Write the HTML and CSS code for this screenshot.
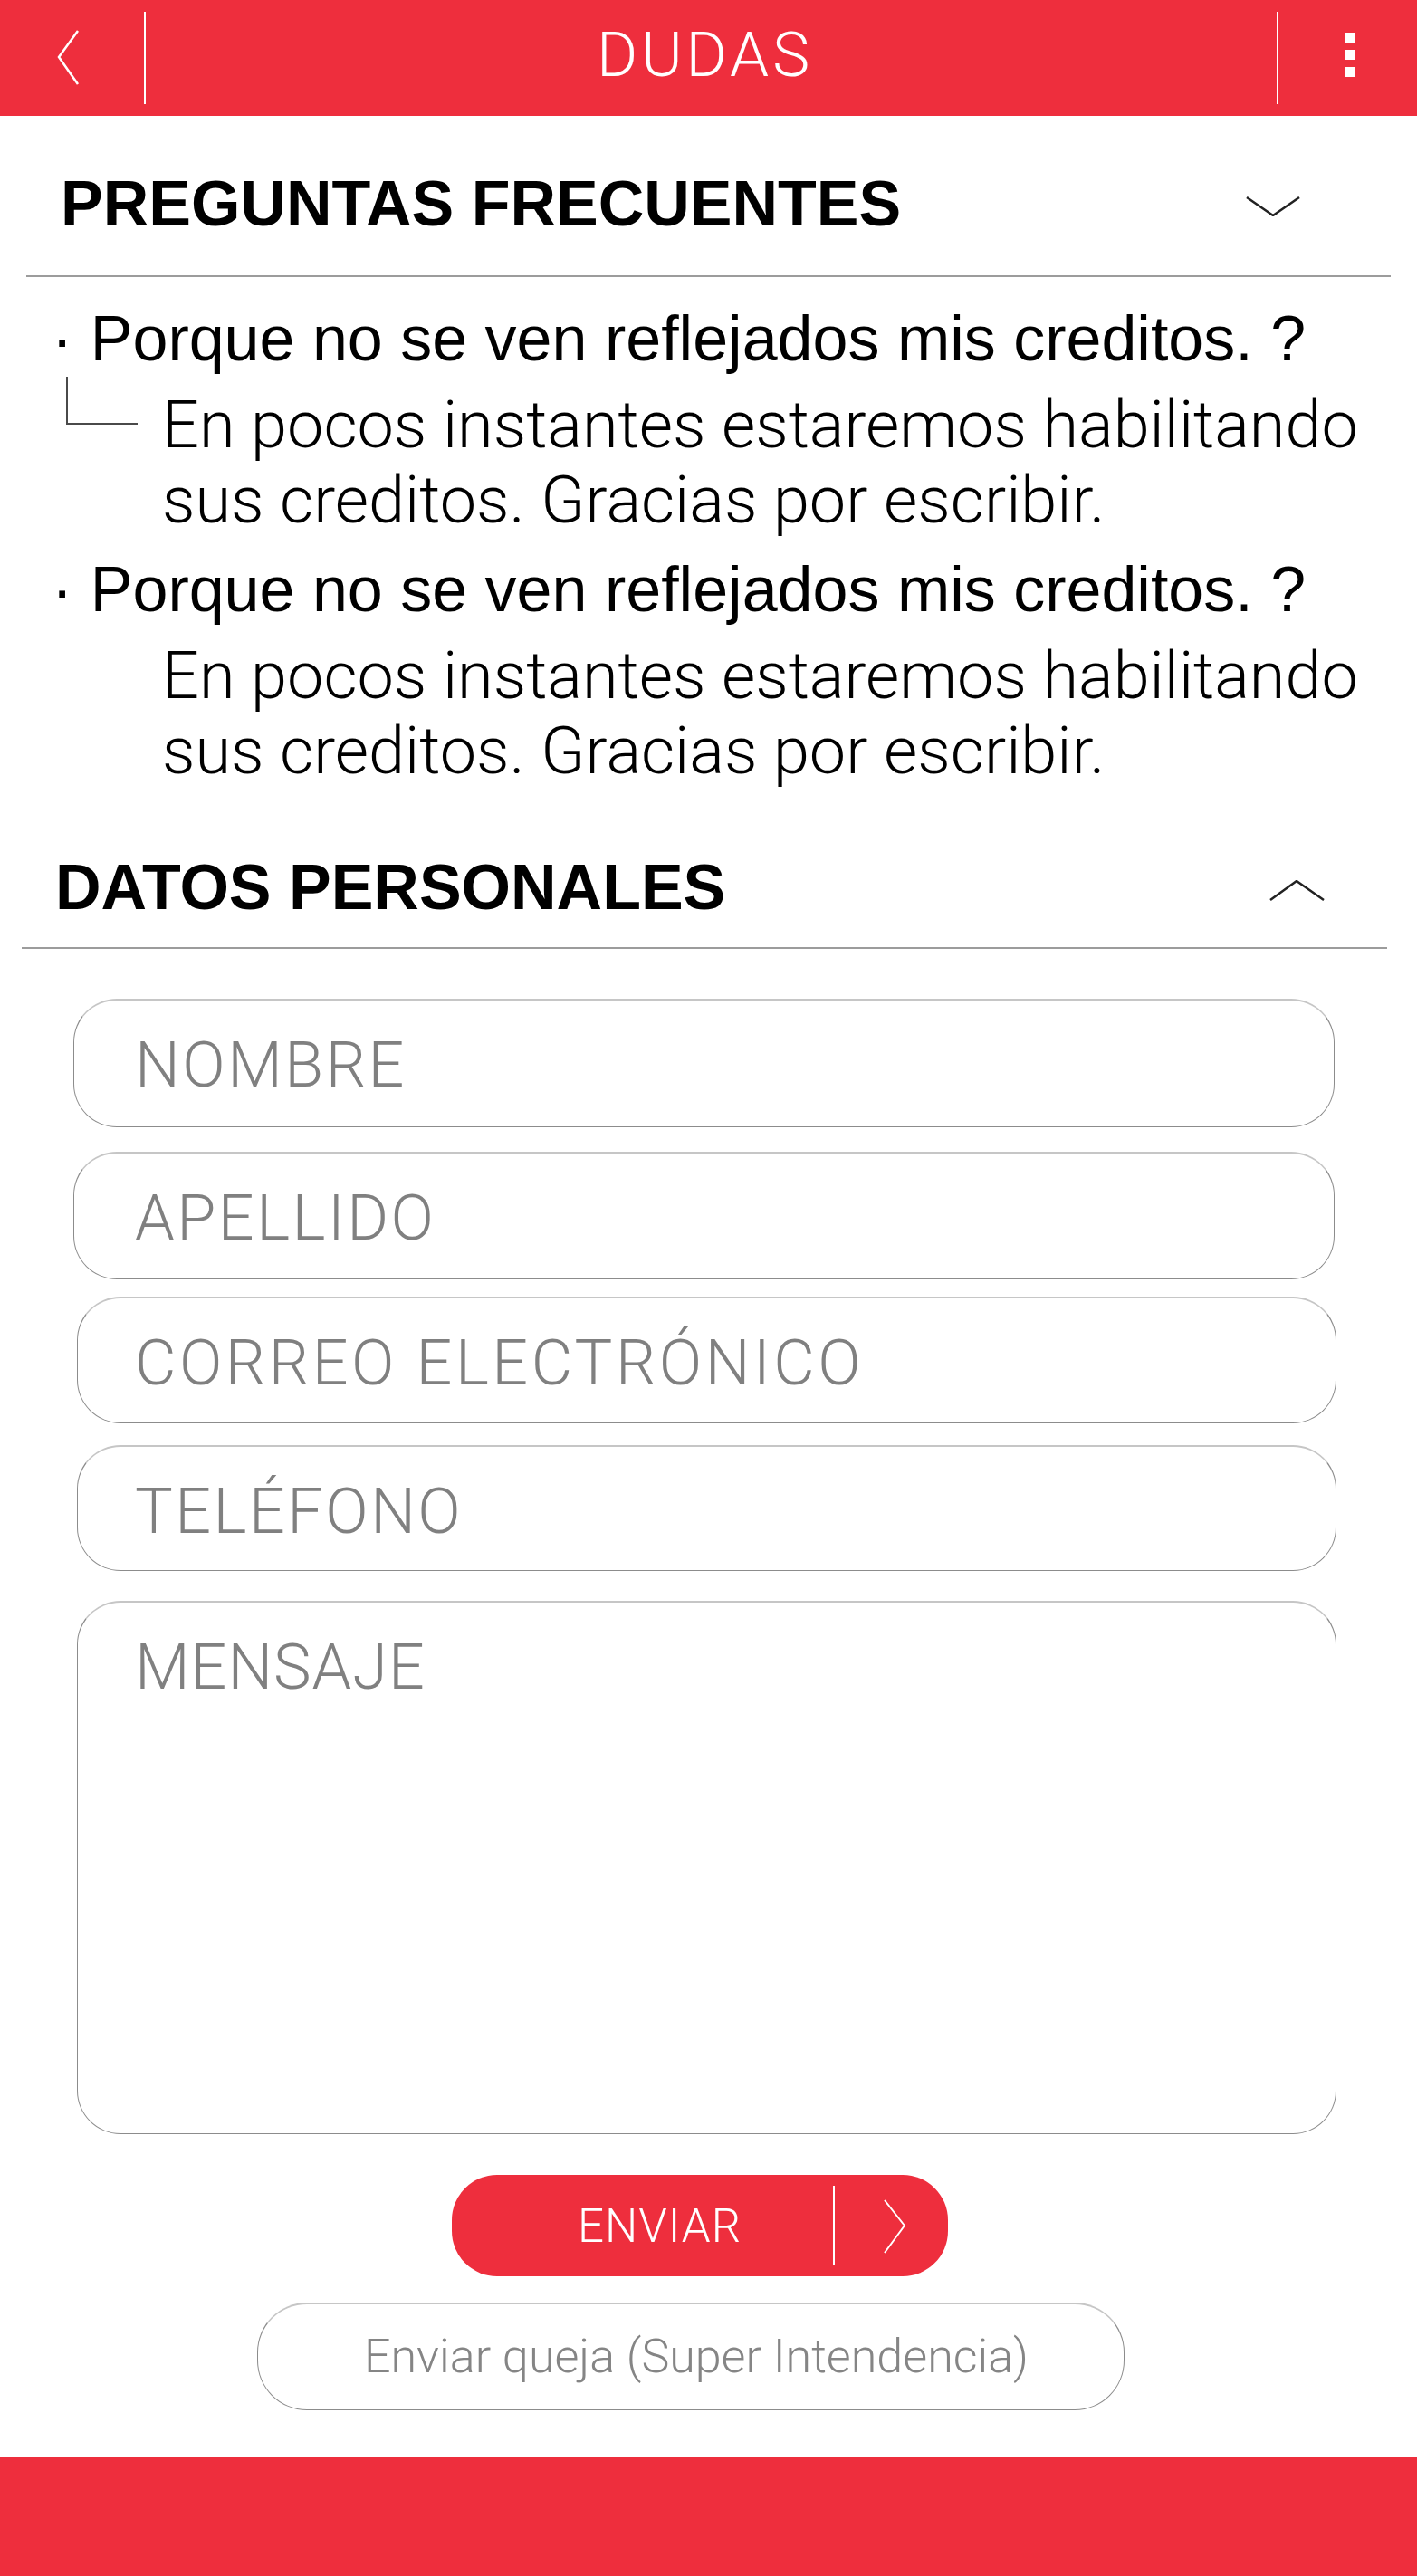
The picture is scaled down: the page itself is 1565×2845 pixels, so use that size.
FILE: index.html
```html
<!DOCTYPE html>
<html lang="es">
<head>
<meta charset="utf-8">
<title>Dudas</title>
<link rel="stylesheet" href="styles.css">
</head>
<body>
<header class="topbar">
  <div class="topbar__back">
    <svg class="topbar__back-icon" width="32" height="66" viewBox="0 0 32 66"><path d="M26 3 L5 32 L26 62" fill="none" stroke="#fff" stroke-width="2.5"/></svg>
  </div>
  <span class="topbar__sep"></span>
  <h1 class="topbar__title">DUDAS</h1>
  <span class="topbar__sep"></span>
  <div class="topbar__menu">
    <span class="topbar__dot"></span>
    <span class="topbar__dot"></span>
    <span class="topbar__dot"></span>
  </div>
</header>

<main class="page">
  <section class="acc">
    <div class="acc__head acc__head--faq">
      <h2 class="acc__title">PREGUNTAS FRECUENTES</h2>
      <svg class="acc__chev" width="60" height="22" viewBox="0 0 60 22"><path d="M1 1 L30 21 L59 1" fill="none" stroke="#222" stroke-width="2.5"/></svg>
    </div>
    <div class="faq">
      <div class="qa">
        <p class="qa__q">· Porque no se ven reflejados mis creditos. ?</p>
        <div class="qa__a">
          <span class="qa__branch"></span>
          <p class="qa__text">En pocos instantes estaremos habilitando sus creditos. Gracias por escribir.</p>
        </div>
      </div>
      <div class="qa">
        <p class="qa__q">· Porque no se ven reflejados mis creditos. ?</p>
        <div class="qa__a">
          <span class="qa__branch qa__branch--hidden"></span>
          <p class="qa__text">En pocos instantes estaremos habilitando sus creditos. Gracias por escribir.</p>
        </div>
      </div>
    </div>
  </section>

  <section class="acc">
    <div class="acc__head acc__head--form">
      <h2 class="acc__title">DATOS PERSONALES</h2>
      <svg class="acc__chev" width="61" height="23" viewBox="0 0 61 23"><path d="M1 22 L30 1 L60 22" fill="none" stroke="#222" stroke-width="2.5"/></svg>
    </div>
    <div class="form">
      <div class="field field--nombre"><span class="field__label">NOMBRE</span></div>
      <div class="field field--apellido"><span class="field__label">APELLIDO</span></div>
      <div class="field field--correo"><span class="field__label">CORREO ELECTRÓNICO</span></div>
      <div class="field field--telefono"><span class="field__label">TELÉFONO</span></div>
      <div class="field field--mensaje"><span class="field__label">MENSAJE</span></div>

      <button class="send" type="button">
        <span class="send__label">ENVIAR</span>
        <span class="send__sep"></span>
        <svg class="send__icon" width="24" height="60" viewBox="0 0 24 60"><path d="M1 1 L23 29 L1 59" fill="none" stroke="#fff" stroke-width="2"/></svg>
      </button>
      <button class="complaint" type="button">Enviar queja (Super Intendencia)</button>
    </div>
  </section>
</main>

<footer class="bottombar"></footer>
</body>
</html>
```

FILE: styles.css
```css
* {
  box-sizing: border-box;
}

html, body {
  margin: 0;
  padding: 0;
}

body {
  width: 1565px;
  background: #fff;
  font-family: "Liberation Sans", Arial, sans-serif;
  color: #000;
}

/* ---------- top bar ---------- */
.topbar {
  height: 128px;
  background: #ee2e3d;
  display: flex;
  align-items: center;
}

.topbar__back {
  width: 159px;
  padding-left: 60px;
  display: flex;
  align-items: center;
}

.topbar__back-icon {
  display: block;
}

.topbar__sep {
  width: 2px;
  height: 102px;
  background: #fff;
  flex: none;
}

.topbar__title {
  flex: 1;
  margin: 0;
  padding: 0 14px 8px 0;
  text-align: center;
  color: #fff;
  font-family: Roboto, "Liberation Sans", Arial, sans-serif;
  font-size: 69px;
  font-weight: 300;
  letter-spacing: 4px;
  line-height: 1;
}

.topbar__menu {
  width: 153px;
  padding-left: 74px;
  margin-bottom: 7px;
  display: flex;
  flex-direction: column;
  gap: 8px;
}

.topbar__dot {
  display: block;
  width: 10px;
  height: 11px;
  background: #fff;
}

/* ---------- accordion ---------- */
.acc__head {
  display: flex;
  align-items: center;
  justify-content: space-between;
  border-bottom: 2px solid #9c9c9c;
}

.acc__head--faq {
  margin: 0 29px;
  padding: 62px 100px 44px 38px;
}

.acc__head--form {
  margin: 0 33px 0 24px;
  padding: 74px 69px 31px 37px;
}

.acc__title {
  margin: 0;
  font-size: 70px;
  font-weight: bold;
  line-height: 70px;
}

.acc__chev {
  display: block;
  margin-top: 6px;
}

/* ---------- faq ---------- */
.faq {
  padding: 27px 29px 0 57px;
}

.qa + .qa {
  margin-top: 16px;
}

.qa__q {
  margin: 0;
  font-size: 70px;
  line-height: 83px;
}

.qa__a {
  display: flex;
}

.qa__branch {
  flex: none;
  width: 79px;
  height: 53px;
  margin: 0 27px 0 16px;
  border-left: 2px solid #4a4a4a;
  border-bottom: 2px solid #4a4a4a;
}

.qa__branch--hidden {
  border-color: transparent;
}

.qa__text {
  margin: 0;
  padding-top: 12px;
  font-family: Roboto, "Liberation Sans", Arial, sans-serif;
  font-weight: 300;
  font-size: 72px;
  line-height: 83px;
}

/* ---------- form ---------- */
.form {
  padding-top: 55px;
  padding-bottom: 52px;
}

.field {
  height: 142px;
  margin: 0 91px 0 81px;
  padding: 36px 0 0 67px;
  border: 1.5px solid #8c8c8c;
  border-top: 2px solid #c6c6c6;
  border-radius: 48px;
}

.field__label {
  display: block;
  font-family: Roboto, "Liberation Sans", Arial, sans-serif;
  font-weight: 300;
  font-size: 70px;
  letter-spacing: 2.5px;
  line-height: 70px;
  color: #808080;
}

.field--apellido {
  margin-top: 27px;
  height: 141px;
}

.field--correo {
  margin: 19px 89px 0 85px;
  padding-left: 63px;
  height: 140px;
}

.field--correo .field__label {
  letter-spacing: 3.5px;
}

.field--telefono {
  margin: 24px 89px 0 85px;
  padding-left: 63px;
  height: 139px;
}

.field--mensaje {
  margin: 33px 89px 0 85px;
  padding-left: 63px;
  height: 589px;
}

.field--mensaje .field__label {
  letter-spacing: 1px;
}

.send {
  display: flex;
  align-items: center;
  width: 548px;
  height: 112px;
  margin: 45px 0 0 499px;
  padding: 0 0 0 139px;
  border: 0;
  border-radius: 50px;
  background: #ee2e3d;
  font-family: inherit;
}

.send__label {
  flex: 1;
  text-align: left;
  color: #fff;
  font-family: Roboto, "Liberation Sans", Arial, sans-serif;
  font-weight: 300;
  font-size: 51px;
  letter-spacing: 1px;
  line-height: 1;
}

.send__sep {
  width: 2px;
  height: 88px;
  background: #fff;
  flex: none;
}

.send__icon {
  display: block;
  margin: 2px 47px 0 54px;
  flex: none;
}

.complaint {
  display: block;
  width: 958px;
  height: 119px;
  margin: 29px 0 0 284px;
  padding: 0 0 0 12px;
  background: #fff;
  border: 1.5px solid #8c8c8c;
  border-top: 2px solid #c6c6c6;
  border-radius: 55px;
  font-family: Roboto, "Liberation Sans", Arial, sans-serif;
  font-weight: 300;
  font-size: 52px;
  line-height: 50px;
  color: #858585;
  text-align: center;
}

/* ---------- bottom bar ---------- */
.bottombar {
  height: 131px;
  background: #ee2e3d;
}
```
